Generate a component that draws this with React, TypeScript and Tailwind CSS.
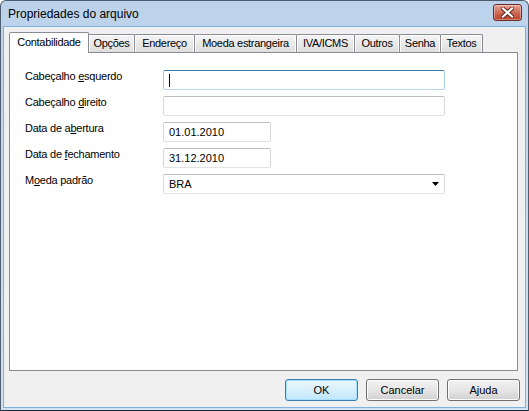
import type { ReactNode } from 'react';

const tabs = [
  { label: 'Opções', w: 'w-[47px]' },
  { label: 'Endereço', w: 'w-[61px]' },
  { label: 'Moeda estrangeira', w: 'w-[103px]' },
  { label: 'IVA/ICMS', w: 'w-[59px]' },
  { label: 'Outros', w: 'w-[46px]' },
  { label: 'Senha', w: 'w-[42px]' },
  { label: 'Textos', w: 'w-[43px]' },
];

function CloseButton() {
  return (
    <div className="w-[29px] h-[17px] rounded-[3px] border border-[#6b2a22] bg-gradient-to-b from-[#e5a497] via-[#cf6a56] to-[#b8402b] shadow-[inset_0_0_0_1px_rgba(255,255,255,0.35)] flex items-center justify-center">
      <svg width="13" height="11" viewBox="0 0 13 11">
        <path d="M2 1.5 L11 9.5 M11 1.5 L2 9.5" stroke="#5c2219" strokeWidth="4" strokeLinecap="square" />
        <path d="M2 1.5 L11 9.5 M11 1.5 L2 9.5" stroke="#ffffff" strokeWidth="2.2" strokeLinecap="square" />
      </svg>
    </div>
  );
}

function Field({ label, width, focused, children }: { label: ReactNode; width: string; focused?: boolean; children?: ReactNode }) {
  const border = focused
    ? 'border-[#a4c9e3] border-t-[#3d7bad] border-b-[#b7d9ed]'
    : 'border-[#d9d9d9] border-t-[#bdbdbd] border-b-[#e3e3e3]';
  return (
    <div className="flex h-[20px]">
      <div className="w-[138px] leading-[13px]">{label}</div>
      <div className={`${width} h-[20px] bg-white border rounded-[2px] ${border} flex items-center pl-[5px] relative`}>
        {children}
      </div>
    </div>
  );
}

export default function App() {
  return (
    <div className="w-[529px] h-[411px] flex flex-col rounded-t-[6px] border border-[#4f5d70] border-b-[#1f2b38] bg-gradient-to-b from-[#bcd2eb] to-[#d3e2f3] font-['Liberation_Sans',Arial,sans-serif] text-black overflow-hidden">
      {/* title bar */}
      <div className="h-[25px] flex items-start pl-[7px] pr-[6px] shrink-0">
        <div className="flex-1 pt-[6px] text-[12px] leading-[14px]">Propriedades do arquivo</div>
        <div className="pt-[3px]">
          <CloseButton />
        </div>
      </div>

      {/* client area */}
      <div className="flex-1 mx-[2px] mb-[2px] border border-[#7fb0df] bg-[#f0f0f0] flex flex-col px-[5px] pt-[5px] pb-[6px] text-[11px] tracking-[-0.25px]">
        {/* tab strip */}
        <div className="h-[20px] flex items-end mr-[2px] shrink-0">
          <div className="relative z-10 w-[80px] h-[21px] -mb-px bg-white border border-b-0 border-[#898c95] rounded-t-[2px] flex items-center justify-center pb-[2px] tracking-[-0.3px]">
            Contabilidade
          </div>
          {tabs.map((t) => (
            <div
              key={t.label}
              className={`${t.w} h-[18px] -ml-px border border-b-0 border-[#898c95] rounded-t-[2px] bg-gradient-to-b from-[#f5f5f5] to-[#dedede] shadow-[inset_1px_1px_0_#ffffff,inset_-1px_0_0_#ffffff] flex items-center justify-center tracking-[-0.3px]`}
            >
              {t.label}
            </div>
          ))}
        </div>

        {/* tab page */}
        <div className="flex-1 mr-[2px] bg-white border border-[#898c95] pl-[15px] pt-[17px] flex flex-col gap-[6px]">
          <Field label={<>Cabeçalho <u>e</u>squerdo</>} width="w-[282px]" focused>
            <div className="w-px h-[13px] bg-black" />
          </Field>
          <Field label={<>Cabeçalho <u>d</u>ireito</>} width="w-[282px]" />
          <Field label={<>Data de a<u>b</u>ertura</>} width="w-[108px]">
            <span className="tracking-normal">01.01.2010</span>
          </Field>
          <Field label={<>Data de <u>f</u>echamento</>} width="w-[108px]">
            <span className="tracking-normal">31.12.2010</span>
          </Field>
          <Field label={<>M<u>o</u>eda padrão</>} width="w-[282px]">
            <span className="flex-1 tracking-normal">BRA</span>
            <svg width="7" height="4" viewBox="0 0 7 4" className="mr-[5px]">
              <path d="M0 0 H7 L3.5 4 Z" fill="#000" />
            </svg>
          </Field>
        </div>

        {/* dialog buttons */}
        <div className="mt-[8px] flex justify-end gap-[8px] shrink-0 tracking-normal">
          <button className="w-[73px] h-[22px] rounded-[3px] border border-[#3c7fb1] bg-gradient-to-b from-[#eaf6fd] via-[#d9f0fc] to-[#bee6fd] shadow-[inset_0_0_0_1px_#a6e0ff] text-[11px]">
            OK
          </button>
          <button className="w-[73px] h-[22px] rounded-[3px] border border-[#707070] bg-gradient-to-b from-[#f2f2f2] via-[#e6e6e6] to-[#d0d0d0] shadow-[inset_0_0_0_1px_#fcfcfc] text-[11px]">
            Cancelar
          </button>
          <button className="w-[73px] h-[22px] rounded-[3px] border border-[#707070] bg-gradient-to-b from-[#f2f2f2] via-[#e6e6e6] to-[#d0d0d0] shadow-[inset_0_0_0_1px_#fcfcfc] text-[11px]">
            Ajuda
          </button>
        </div>
      </div>
    </div>
  );
}
